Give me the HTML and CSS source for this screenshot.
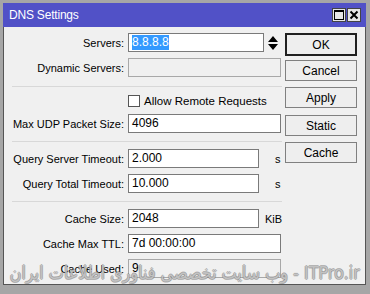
FILE: index.html
```html
<!DOCTYPE html>
<html>
<head>
<meta charset="utf-8">
<link rel="stylesheet" href="styles.css">
</head>
<body>
<div class="window">
  <div class="titlebar">
    <span class="title">DNS Settings</span>
    <div class="tbtns">
      <span class="tbtn"><svg width="10" height="10" viewBox="0 0 10 10"><rect x="0.5" y="0.5" width="9" height="9" fill="none" stroke="#000" stroke-width="1"/><rect x="0.5" y="0.5" width="9" height="1.5" fill="#000"/></svg></span>
      <span class="tbtn"><svg width="10" height="10" viewBox="0 0 10 10"><path d="M1.5 1.5 L8.5 8.5 M8.5 1.5 L1.5 8.5" stroke="#000" stroke-width="2"/></svg></span>
    </div>
  </div>
  <div class="body">
    <div class="form">
      <div class="row">
        <label class="lbl">Servers:</label>
        <div class="field short"><span class="sel">8.8.8.8</span></div>
        <span class="spin"><svg width="10" height="14" viewBox="0 0 10 14"><path d="M5 0 L10 6 L0 6 Z M0 8 L10 8 L5 14 Z" fill="#000"/></svg></span>
      </div>
      <div class="row">
        <label class="lbl">Dynamic Servers:</label>
        <div class="field full disabled"></div>
      </div>
      <div class="sep first"></div>
      <div class="row check">
        <span class="lbl"></span>
        <span class="box"></span><span class="ctext">Allow Remote Requests</span>
      </div>
      <div class="row">
        <label class="lbl">Max UDP Packet Size:</label>
        <div class="field full">4096</div>
      </div>
      <div class="sep"></div>
      <div class="row">
        <label class="lbl">Query Server Timeout:</label>
        <div class="field mid">2.000</div>
        <span class="unit s">s</span>
      </div>
      <div class="row">
        <label class="lbl">Query Total Timeout:</label>
        <div class="field mid">10.000</div>
        <span class="unit s">s</span>
      </div>
      <div class="sep"></div>
      <div class="row">
        <label class="lbl">Cache Size:</label>
        <div class="field mid">2048</div>
        <span class="unit">KiB</span>
      </div>
      <div class="row">
        <label class="lbl">Cache Max TTL:</label>
        <div class="field full">7d 00:00:00</div>
      </div>
      <div class="row">
        <label class="lbl">Cache Used:</label>
        <div class="field full disabled">9</div>
      </div>
    </div>
    <div class="buttons">
      <button class="btn default">OK</button>
      <button class="btn">Cancel</button>
      <button class="btn">Apply</button>
      <button class="btn gap">Static</button>
      <button class="btn">Cache</button>
    </div>
    <div class="watermark"><span class="wm">وب سایت تخصصی فناوری اطلاعات ایران - ITPro.ir</span></div>
  </div>
</div>
</body>
</html>
```

FILE: styles.css
```css
html, body {
  margin: 0;
  padding: 0;
}
body {
  width: 370px;
  height: 294px;
  overflow: hidden;
  background: #a4a4a4;
  font-family: "Liberation Sans", Arial, sans-serif;
  font-size: 11px;
  color: #000;
}
.window {
  width: 370px;
  height: 294px;
  box-sizing: border-box;
  padding: 3px 4px 9px 3px;
  background: #a6a6a6;
  display: flex;
  flex-direction: column;
}
.titlebar {
  height: 24px;
  flex: none;
  background: #5151c7;
  display: flex;
  align-items: center;
  justify-content: space-between;
  padding: 0 5px 0 6px;
}
.title {
  color: #fff;
  font-size: 12px;
  letter-spacing: -0.2px;
}
.tbtns {
  display: flex;
  gap: 1px;
}
.tbtn {
  width: 14px;
  height: 14px;
  box-sizing: border-box;
  background: #e6e6e6;
  border: 1px solid #444;
  display: flex;
  align-items: center;
  justify-content: center;
}
.body {
  flex: 1;
  background: #f0f0f0;
  border: 1px solid #555;
  border-top: none;
  display: flex;
  position: relative;
  overflow: hidden;
}
.form {
  width: 278px;
  padding-top: 6px;
  display: flex;
  flex-direction: column;
}
.row {
  display: flex;
  align-items: center;
  height: 19px;
  margin-bottom: 6px;
}
.lbl {
  width: 120px;
  flex: none;
  text-align: right;
  padding-right: 4px;
}
.field {
  height: 19px;
  box-sizing: border-box;
  border: 1px solid #7a7a7a;
  background: #fff;
  padding: 0 3px;
  line-height: 17px;
  font-size: 12px;
}
.field.full { width: 153px; }
.field.short { width: 136px; }
.field.mid { width: 131px; }
.field.disabled {
  background: #f0f0f0;
  border-color: #a8a8a8;
}
.sel {
  background: #3399ff;
  color: #fff;
  display: inline-block;
  line-height: 15px;
}
.spin {
  margin-left: 4px;
  display: flex;
}
.unit {
  margin-left: 6px;
}
.unit.s {
  margin-left: 16px;
}
.sep {
  height: 1px;
  background: #d8d8d8;
  margin: 2px 0 7px 8px;
}
.sep.first {
  margin-top: 3px;
}
.row.check {
  height: 13px;
  margin-bottom: 7px;
}
.box {
  width: 12px;
  height: 12px;
  box-sizing: border-box;
  border: 1px solid #555;
  background: #fff;
  flex: none;
}
.ctext {
  margin-left: 4px;
  font-size: 11.5px;
}
.buttons {
  display: flex;
  flex-direction: column;
  gap: 6px;
  padding-top: 6px;
  margin-left: 3px;
}
.btn {
  width: 72px;
  height: 21px;
  box-sizing: border-box;
  border: 1px solid #808080;
  background: #eeeeee;
  font-family: "Liberation Sans", Arial, sans-serif;
  font-size: 12px;
  padding: 0;
  color: #000;
}
.btn.default {
  border: 2px solid #202020;
  height: 23px;
  margin-bottom: -2px;
}
.btn.gap {
  margin-top: 1px;
}
.watermark {
  position: absolute;
  left: 0;
  right: 0;
  bottom: 1px;
  display: flex;
  justify-content: center;
  pointer-events: none;
}
.wm {
  display: inline-block;
  white-space: nowrap;
  font-family: "DejaVu Sans", sans-serif;
  font-size: 18px;
  transform: scaleX(0.89);
  color: rgba(210, 210, 210, 0.8);
  text-shadow: 1px 0 0 rgba(120, 120, 120, 0.5), -1px 0 0 rgba(120, 120, 120, 0.5), 0 1px 0 rgba(120, 120, 120, 0.5), 0 -1px 0 rgba(120, 120, 120, 0.5);
}
```
